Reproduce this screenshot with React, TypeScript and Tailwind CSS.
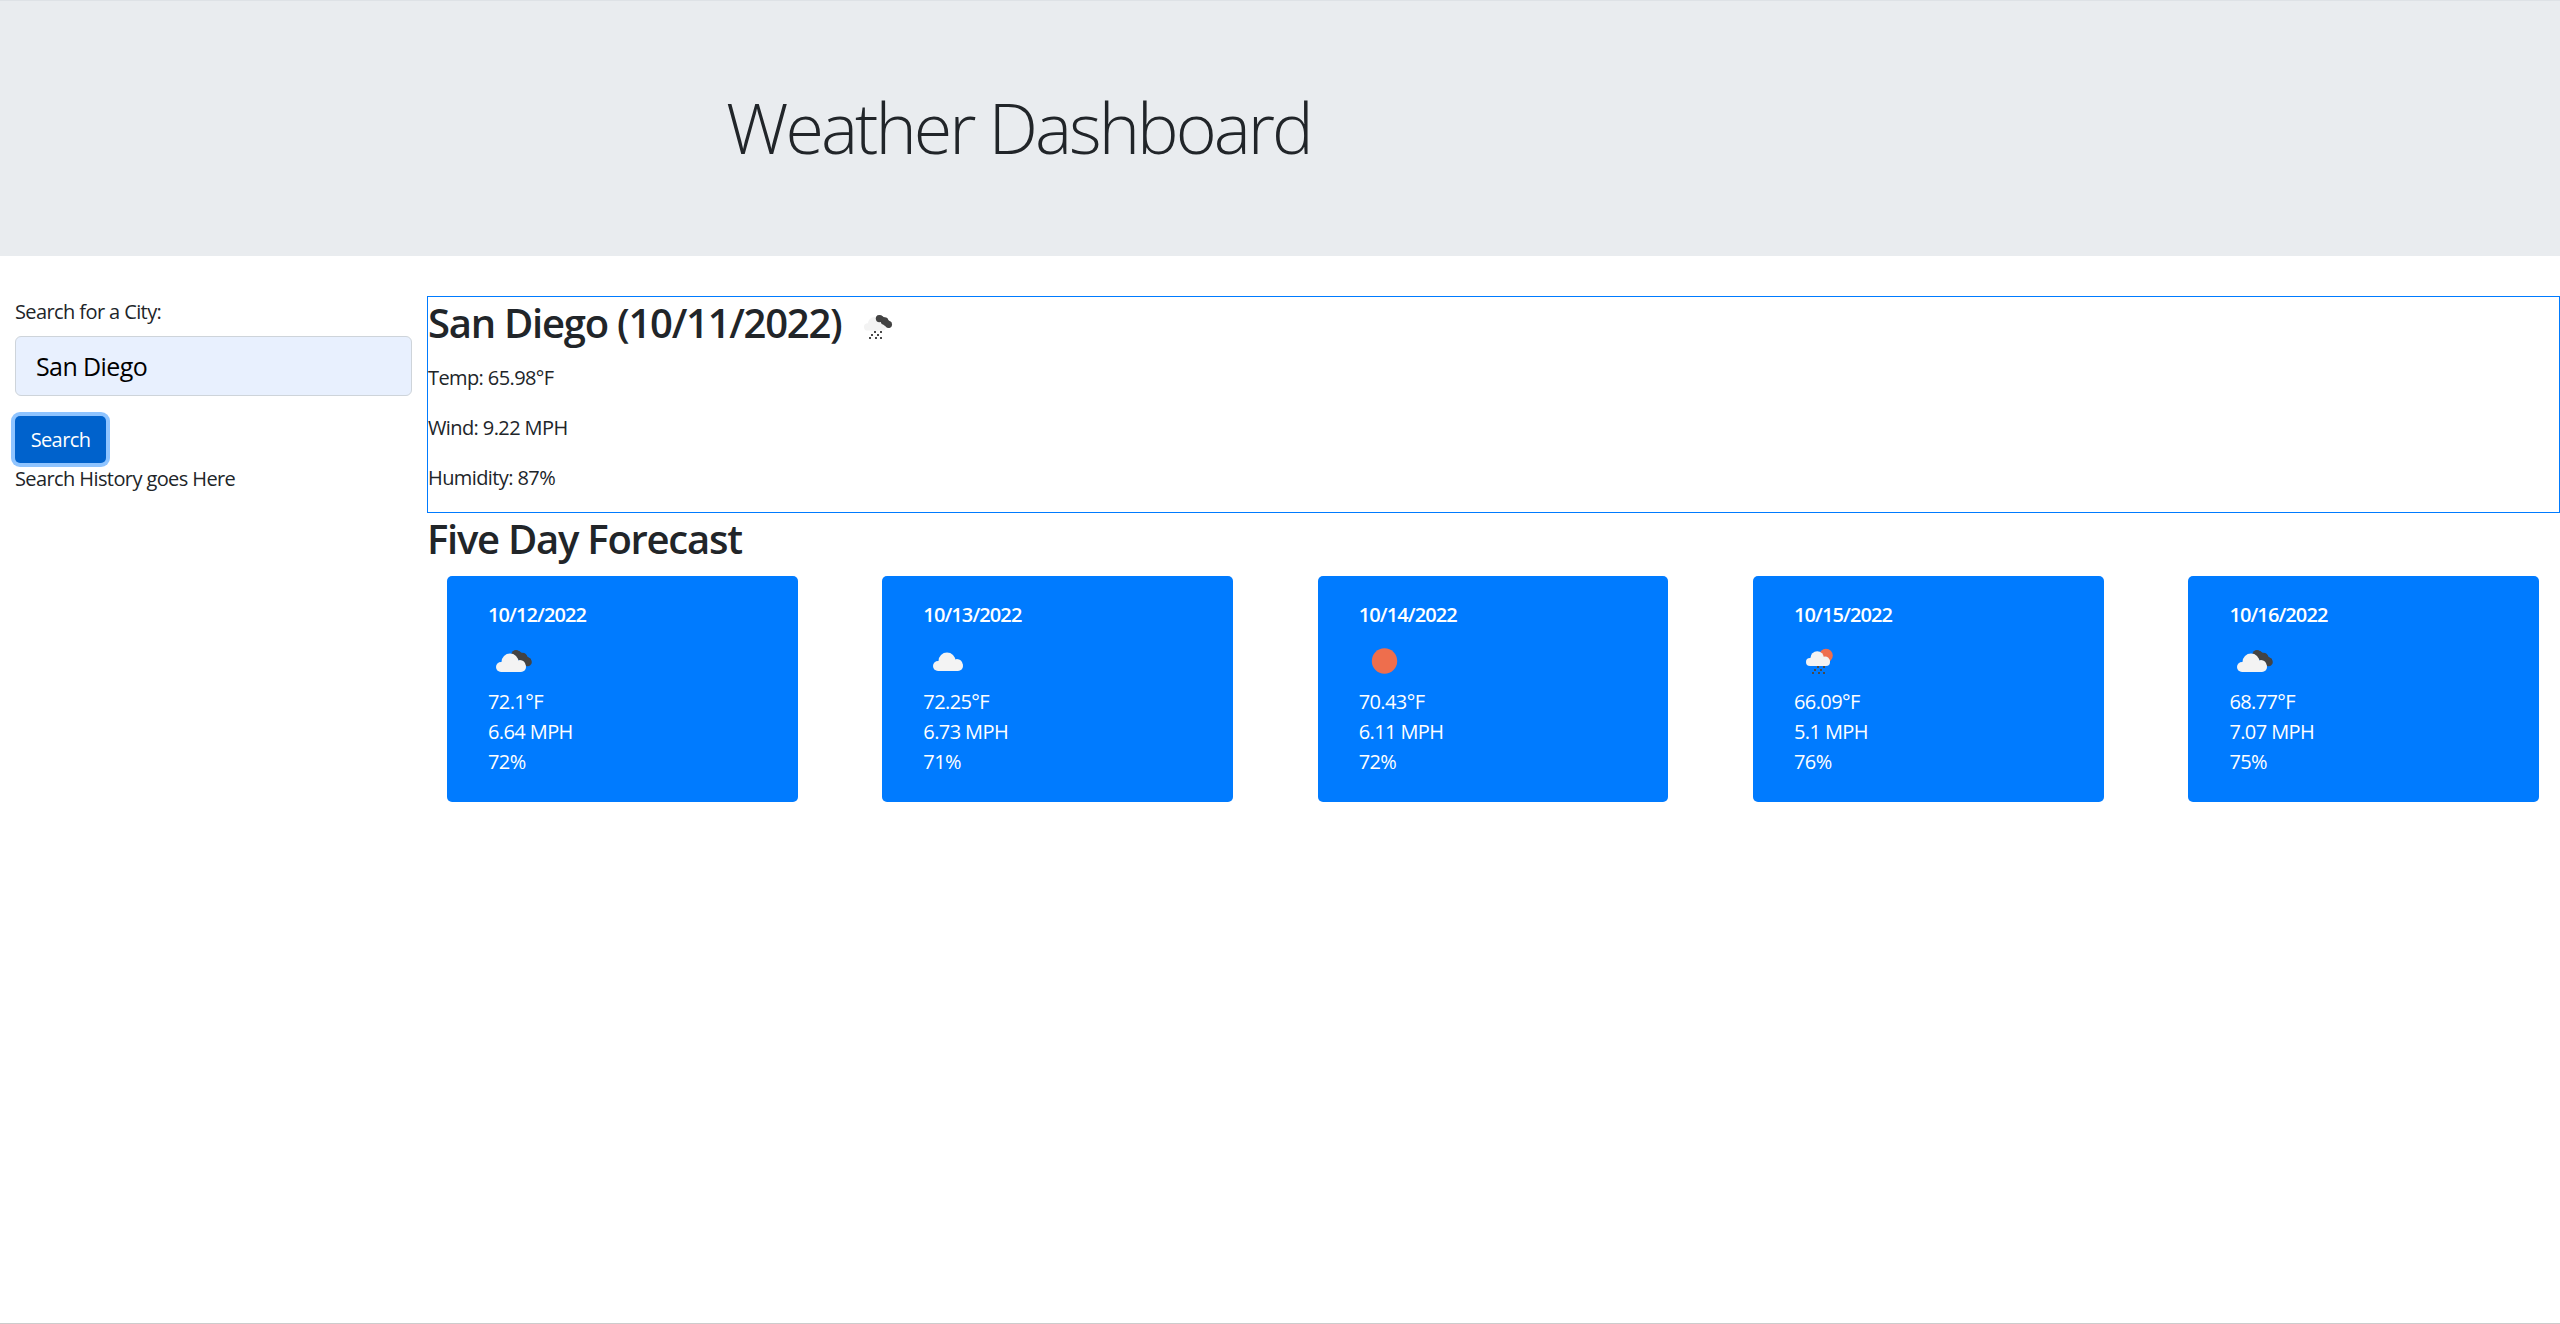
const forecast = [
  { date: "10/12/2022", icon: "clouds", temp: "72.1°F", wind: "6.64 MPH", humidity: "72%" },
  { date: "10/13/2022", icon: "cloud", temp: "72.25°F", wind: "6.73 MPH", humidity: "71%" },
  { date: "10/14/2022", icon: "sun", temp: "70.43°F", wind: "6.11 MPH", humidity: "72%" },
  { date: "10/15/2022", icon: "sunrain", temp: "66.09°F", wind: "5.1 MPH", humidity: "76%" },
  { date: "10/16/2022", icon: "clouds", temp: "68.77°F", wind: "7.07 MPH", humidity: "75%" },
];

function DarkCloud({ x = 0, y = 0, scale = 1 }: { x?: number; y?: number; scale?: number }) {
  return (
    <g fill="#434343" transform={`translate(${x} ${y}) scale(${scale})`}>
      <circle cx="28" cy="24.5" r="4.5" />
      <circle cx="34.5" cy="27.5" r="4.8" />
      <circle cx="39.5" cy="32" r="4.3" />
      <path d="M25 21 L31 21 L43 29 L41 36 L34 33 Z" />
    </g>
  );
}

function Cloud({ x = 0, y = 0, scale = 1 }: { x?: number; y?: number; scale?: number }) {
  return (
    <g fill="#f3f3f3" transform={`translate(${x} ${y}) scale(${scale})`}>
      <circle cx="14" cy="10" r="8.5" />
      <circle cx="24" cy="13.5" r="5.5" />
      <rect x="0" y="10" width="30" height="10" rx="5" />
    </g>
  );
}

function RainDots({ x = 0, y = 0 }: { x?: number; y?: number }) {
  return (
    <g fill="#4a4a4a" transform={`translate(${x} ${y})`}>
      <rect x="6" y="0" width="2" height="2" />
      <rect x="12" y="0" width="2" height="2" />
      <rect x="3" y="3" width="2" height="2" />
      <rect x="9" y="3" width="2" height="2" />
      <rect x="1" y="6" width="2" height="2" />
      <rect x="7" y="6" width="2" height="2" />
      <rect x="12" y="6" width="2" height="2" />
    </g>
  );
}

function WeatherIcon({ kind }: { kind: string }) {
  return (
    <svg width="60" height="57" viewBox="0 0 60 57" className="block">
      {kind === "clouds" && (
        <>
          <DarkCloud />
          <Cloud x={8} y={22} />
        </>
      )}
      {kind === "cloud" && <Cloud x={10} y={21} />}
      {kind === "sun" && <circle cx="25.5" cy="31" r="12.7" fill="#ee6e4d" />}
      {kind === "sunrain" && (
        <>
          <circle cx="32" cy="25.5" r="6.8" fill="#ee6e4d" />
          <Cloud x={12} y={20} scale={0.8} />
          <RainDots x={17} y={36} />
        </>
      )}
      {kind === "mainrain" && (
        <>
          <Cloud x={8} y={21} scale={0.73} />
          <DarkCloud x={1} y={4} scale={0.8} />
          <RainDots x={12} y={36} />
        </>
      )}
    </svg>
  );
}

export default function App() {
  return (
    <div className="h-[1324px] border-t border-b border-t-[#dee2e6] border-b-[#cccccc] bg-white font-['Open_Sans',sans-serif] text-[20px] leading-[30px] text-[#212529] tracking-[-0.6px]">
      <header className="h-[255px] bg-[#e9ecef] pt-[84px] pl-[726px]">
        <h1 className="text-[70px] leading-[84px] font-light tracking-[-3px]">Weather Dashboard</h1>
      </header>

      <main className="flex pt-[40px]">
        <aside className="w-[427px] shrink-0 px-[15px]">
          <label className="block mt-[1px] mb-[9px]">Search for a City:</label>
          <input
            readOnly
            value="San Diego"
            className="block w-full h-[60px] px-[20px] rounded-[6px] border border-[#ced4da] bg-[#e8f0fe] text-[25px] text-black outline-none"
          />
          <button className="mt-[20px] block h-[47px] w-[91px] rounded-[5px] bg-[#0062cc] text-white ring-[4px] ring-[#8fc4ff]">
            Search
          </button>
          <div className="mt-[1px]">Search History goes Here</div>
        </aside>

        <section className="flex-1 min-w-0">
          <div className="h-[217px] border border-[#007bff]">
            <h2 className="flex h-[66px] pt-[2px] text-[40px] leading-[48px] font-semibold tracking-[-1.25px]">
              <span>San Diego (10/11/2022)</span>
              <span className="ml-[14px] -mt-[4px]">
                <WeatherIcon kind="mainrain" />
              </span>
            </h2>
            <p className="mb-[20px]">Temp: 65.98°F</p>
            <p className="mb-[20px]">Wind: 9.22 MPH</p>
            <p>Humidity: 87%</p>
          </div>

          <h2 className="mt-[2px] mb-[13px] text-[40px] leading-[48px] font-semibold tracking-[-1.25px]">Five Day Forecast</h2>

          <div className="flex justify-between pl-[20px] pr-[21px]">
            {forecast.map((day) => (
              <div key={day.date} className="w-[350.6px] h-[226px] rounded-[5px] bg-[#007bff] pt-[24px] px-[41px] text-white">
                <div className="font-semibold tracking-[-0.9px]">{day.date}</div>
                <WeatherIcon kind={day.icon} />
                <div>{day.temp}</div>
                <div>{day.wind}</div>
                <div>{day.humidity}</div>
              </div>
            ))}
          </div>
        </section>
      </main>
    </div>
  );
}
